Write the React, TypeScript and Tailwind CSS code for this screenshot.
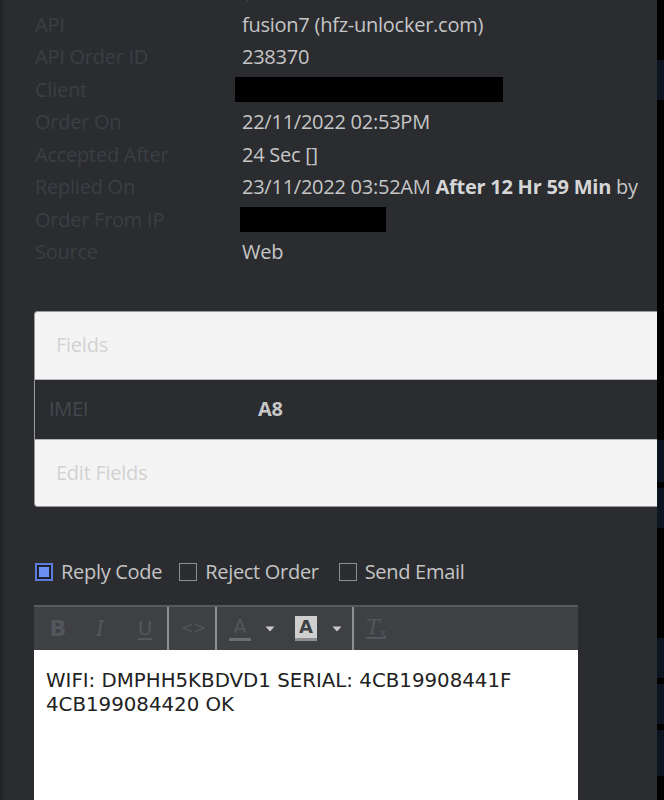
import React from 'react';

const rows: { label: string; value: React.ReactNode }[] = [
  { label: 'Amount', value: <span className="text-[#22a04f]">$1.50</span> },
  { label: 'API', value: 'fusion7 (hfz-unlocker.com)' },
  { label: 'API Order ID', value: '238370' },
  { label: 'Client', value: <span className="block w-[268px] h-[25px] bg-black -ml-[7px]" /> },
  { label: 'Order On', value: '22/11/2022 02:53PM' },
  { label: 'Accepted After', value: '24 Sec []' },
  {
    label: 'Replied On',
    value: (
      <span className="whitespace-nowrap">
        23/11/2022 03:52AM <b className="font-bold text-[#d6d6d6]">After 12 Hr 59 Min</b> by
      </span>
    ),
  },
  { label: 'Order From IP', value: <span className="block w-[146px] h-[25px] bg-black -ml-[2px]" /> },
  { label: 'Source', value: 'Web' },
];

const dejavu = { fontFamily: '"DejaVu Sans", sans-serif' };
const serif = { fontFamily: '"DejaVu Serif", serif' };

const Caret = () => (
  <svg width="10" height="6" viewBox="0 0 10 6" className="mt-[2px]">
    <path d="M0.5 0.5h9L5 5.5z" fill="#c9c9c9" />
  </svg>
);

const Sep = ({ className }: { className: string }) => <div className={`w-[2px] self-stretch bg-[#8e8f92] ${className}`} />;

function Check({ checked, label }: { checked?: boolean; label: string }) {
  return (
    <label className="flex items-center gap-[8px]">
      <span
        className={
          checked
            ? 'w-[18px] h-[18px] border-2 border-[#5f7bd6] bg-[#1c1f2e] p-[2px] flex'
            : 'w-[18px] h-[18px] border border-[#8c8d90]'
        }
      >
        {checked && <span className="flex-1 bg-[#6b8ff2]" />}
      </span>
      <span>{label}</span>
    </label>
  );
}

export default function App() {
  return (
    <div className="w-[664px] h-[800px] flex bg-black overflow-hidden" style={{ fontFamily: '"Open Sans", "Noto Sans", sans-serif' }}>
      <div className="w-[3px] bg-[#222327]" />
      <div className="w-[654px] bg-[#2a2c30] overflow-hidden">
        {/* order details */}
        <div className="-mt-[24px] text-[20px] tracking-[-0.25px]">
          {rows.map((r) => (
            <div key={r.label} className="h-[32.5px] flex items-center">
              <div className="w-[239px] pl-[32px] text-[#3b3e43]">{r.label}</div>
              <div className="text-[#c6c6c6]">{r.value}</div>
            </div>
          ))}
        </div>

        {/* custom fields */}
        <div className="mt-[42px] ml-[31px] -mr-[8px] rounded-[3px] border border-[#9a9a9a] overflow-hidden text-[20px] tracking-[-0.25px]">
          <div className="h-[67px] bg-[#f4f4f4] flex items-center pl-[21px] text-[#d2d2d2]">Fields</div>
          <div className="h-[61px] bg-[#2a2c30] flex items-center border-y border-[#b5b5b5]">
            <div className="w-[223px] pl-[14px] text-[#45484d]">IMEI</div>
            <div className="font-bold text-[#c8c8c8]">A8</div>
          </div>
          <div className="h-[66px] bg-[#f4f4f4] flex items-center pl-[21px] text-[#d2d2d2]">Edit Fields</div>
        </div>

        {/* reply options */}
        <div className="mt-[52px] ml-[32px] flex text-[20px] tracking-[-0.3px] text-[#c4c4c4] h-[26px] items-center">
          <Check checked label="Reply Code" />
          <span className="w-[17px]" />
          <Check label="Reject Order" />
          <span className="w-[20px]" />
          <Check label="Send Email" />
        </div>

        {/* reply editor */}
        <div className="mt-[20px] ml-[31px] w-[544px]">
          <div className="h-[45px] bg-[#3e4044] border-t-2 border-[#57595d] flex items-center pl-[12px] text-[#53565a]">
            <span className="font-bold w-[24px] text-center text-[22px]" style={dejavu}>B</span>
            <span className="italic w-[24px] ml-[18px] text-center text-[22px]" style={serif}>I</span>
            <span className="w-[24px] ml-[21px] text-center text-[20px] underline underline-offset-[3px]" style={dejavu}>U</span>
            <Sep className="ml-[10px]" />
            <span className="w-[24px] ml-[12px] text-center text-[15px]" style={dejavu}>&lt;&gt;</span>
            <Sep className="ml-[10px]" />
            <span className="ml-[11px] w-[24px] flex flex-col items-center">
              <span className="text-[19px] leading-[20px]" style={dejavu}>A</span>
              <span className="w-[22px] h-[3px] bg-[#6a6c70] mt-[2px]" />
            </span>
            <span className="ml-[13px] flex"><Caret /></span>
            <span className="ml-[20px] w-[22px] h-[25px] bg-[#cfcfcf] text-[#3e4044] text-[18px] leading-[22px] text-center font-bold border-b-[3px] border-[#8d8f92]" style={dejavu}>A</span>
            <span className="ml-[15px] flex"><Caret /></span>
            <Sep className="ml-[10px]" />
            <span className="ml-[12px] w-[24px] italic text-[21px] underline underline-offset-[3px]" style={serif}>
              T<sub className="text-[11px] not-italic">x</sub>
            </span>
          </div>
          <div className="h-[160px] bg-white pt-[19px] pl-[12px] text-[19.8px] leading-[24px] text-[#222]" style={dejavu}>
            WIFI: DMPHH5KBDVD1 SERIAL: 4CB19908441F
            <br />
            4CB199084420 OK
          </div>
        </div>
      </div>
      <div className="flex-1 flex flex-col">
        <div className="h-[60px]" />
        <div className="h-[40px] bg-[#0c1422]" />
        <div className="h-[340px]" />
        <div className="h-[42px] bg-[#0c1422]" />
        <div className="h-[40px] bg-[#0c1422] mt-[6px]" />
        <div className="h-[110px]" />
        <div className="h-[40px] bg-[#0c1422]" />
        <div className="h-[40px] bg-[#0c1422] mt-[6px]" />
        <div className="h-[46px] bg-[#0c1422] mt-[6px]" />
      </div>
    </div>
  );
}
